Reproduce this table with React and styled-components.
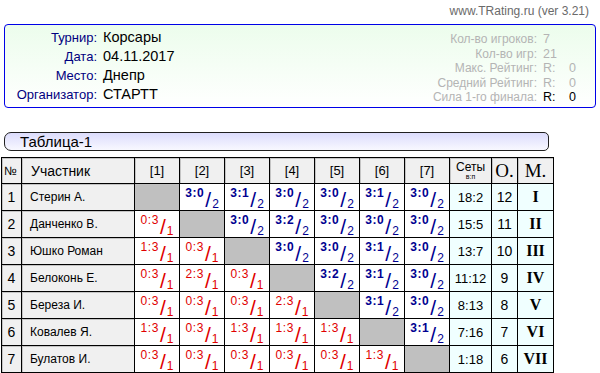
import styled, { createGlobalStyle } from "styled-components";

const GlobalStyle = createGlobalStyle`
  html, body {
    margin: 0;
    padding: 0;
    background: #fff;
  }
  body {
    font-family: "Liberation Sans", Arial, sans-serif;
    color: #000;
  }
`;

const Page = styled.div`
  width: 600px;
  height: 373px;
  overflow: hidden;
  display: flex;
  flex-direction: column;
`;

const SiteLine = styled.div`
  height: 24px;
  padding-right: 11px;
  font-size: 12px;
  line-height: 22px;
  color: #6a6a6a;
  text-align: right;
`;

const InfoBox = styled.div`
  margin: 0 4px;
  height: 82px;
  border: 1px solid #0000e8;
  border-radius: 4px;
  background: linear-gradient(to bottom, #ecfdec, #ffffff);
  display: flex;
  justify-content: space-between;
`;

const MainInfo = styled.div`
  display: grid;
  grid-template-columns: 92px auto;
  column-gap: 6px;
  padding-top: 3px;
  align-content: start;
`;

const InfoLabel = styled.div`
  font-size: 13px;
  line-height: 19px;
  color: #000080;
  text-align: right;
`;

const InfoValue = styled.div`
  font-size: 14.5px;
  line-height: 19px;
`;

const Stats = styled.div`
  display: grid;
  grid-template-columns: auto 34px;
  column-gap: 6px;
  padding: 7px 18px 0 0;
  align-content: start;
`;

const StatLabel = styled.div`
  font-size: 12px;
  line-height: 14.6px;
  color: #b4b4b4;
  text-align: right;
`;

const StatValue = styled.div`
  display: flex;
  font-size: 12.5px;
  line-height: 14.6px;
  color: ${(p) => (p.$dark ? "#000" : "#b4b4b4")};
`;

const RLabel = styled.span`
  width: 26px;
`;

const TitleBar = styled.div`
  margin: 24px 51px 0 4px;
  height: 17px;
  border: 1px solid #202020;
  border-radius: 7px 5px 5px 7px;
  background: linear-gradient(to bottom, #dcdcfc, #f8f8ff);
  padding-left: 15px;
  font-size: 15px;
  line-height: 17px;
`;

const Table = styled.table`
  margin: 6px 0 0 1px;
  border-collapse: collapse;
  table-layout: fixed;
  width: 553px;
  border: 1px solid #000;
`;

const Th = styled.th`
  height: 25px;
  padding: 0;
  border: 1px solid #000;
  background: #f0f0f0;
  box-shadow: inset 1px 1px 0 #c4c4c4;
  font-weight: normal;
  font-size: ${(p) => p.$size || 13}px;
  font-family: ${(p) =>
    p.$serif
      ? '"Liberation Serif", "Times New Roman", serif'
      : '"Liberation Sans", Arial, sans-serif'};
  text-align: ${(p) => p.$align || "center"};
  padding-left: ${(p) => p.$pad || 0}px;
  vertical-align: middle;
  line-height: 1;
`;

const SetsHead = styled.div`
  font-size: 12px;
  line-height: 12px;
  margin-top: 1px;
`;

const SmallSub = styled.div`
  font-size: 7px;
  line-height: 8px;
`;

const Td = styled.td`
  height: 26px;
  padding: 0;
  border: 1px solid #000;
  vertical-align: middle;
  text-align: center;
  line-height: 1;
`;

const NumCell = styled(Td)`
  background: #f0f0f0;
  box-shadow: inset 1px 1px 0 #c4c4c4;
  font-size: 14px;
`;

const NameCell = styled(Td)`
  background: #f0f0f0;
  box-shadow: inset 1px 1px 0 #c4c4c4;
  font-size: 12px;
  text-align: left;
  padding-left: 8px;
`;

const EmptyCell = styled(Td)`
  background: #c0c0c0;
`;

const ScoreCell = styled(Td)`
  background: #fff;
`;

const TotalCell = styled(Td)`
  background: #f0ffff;
  font-size: ${(p) => p.$size || 13}px;
  font-family: ${(p) =>
    p.$serif
      ? '"Liberation Serif", "Times New Roman", serif'
      : '"Liberation Sans", Arial, sans-serif'};
  font-weight: ${(p) => (p.$serif ? "bold" : "normal")};
`;

const ScoreBox = styled.div`
  display: flex;
  justify-content: center;
  height: 26px;
  color: ${(p) => (p.$win ? "#000090" : "#e00000")};
  font-weight: ${(p) => (p.$win ? "bold" : "normal")};
`;

const Sets = styled.span`
  font-size: 12px;
  line-height: 12px;
  margin-top: 3px;
  letter-spacing: 0.6px;
`;

const Slash = styled.span`
  font-size: 21px;
  line-height: 21px;
  margin: 5px 0 0 1px;
  font-weight: normal;
`;

const Points = styled.span`
  font-size: 12px;
  line-height: 12px;
  margin: 14px 0 0 1px;
  font-weight: normal;
`;

const players = [
  { name: "Стерин А.", games: ["x", "3:0", "3:1", "3:0", "3:0", "3:1", "3:0"], sets: "18:2", pts: 12, place: "I" },
  { name: "Данченко В.", games: ["0:3", "x", "3:0", "3:2", "3:0", "3:0", "3:0"], sets: "15:5", pts: 11, place: "II" },
  { name: "Юшко Роман", games: ["1:3", "0:3", "x", "3:0", "3:0", "3:1", "3:0"], sets: "13:7", pts: 10, place: "III" },
  { name: "Белоконь Е.", games: ["0:3", "2:3", "0:3", "x", "3:2", "3:1", "3:0"], sets: "11:12", pts: 9, place: "IV" },
  { name: "Береза И.", games: ["0:3", "0:3", "0:3", "2:3", "x", "3:1", "3:0"], sets: "8:13", pts: 8, place: "V" },
  { name: "Ковалев Я.", games: ["1:3", "0:3", "1:3", "1:3", "1:3", "x", "3:1"], sets: "7:16", pts: 7, place: "VI" },
  { name: "Булатов И.", games: ["0:3", "0:3", "0:3", "0:3", "0:3", "1:3", "x"], sets: "1:18", pts: 6, place: "VII" },
];

const Game = ({ score }) => {
  const win = score.startsWith("3");
  return (
    <ScoreBox $win={win}>
      <Sets>{score}</Sets>
      <Slash>/</Slash>
      <Points>{win ? 2 : 1}</Points>
    </ScoreBox>
  );
};

const App = () => {
  return (
    <Page>
      <GlobalStyle />
      <SiteLine>www.TRating.ru (ver 3.21)</SiteLine>
      <InfoBox>
        <MainInfo>
          <InfoLabel>Турнир:</InfoLabel>
          <InfoValue>Корсары</InfoValue>
          <InfoLabel>Дата:</InfoLabel>
          <InfoValue>04.11.2017</InfoValue>
          <InfoLabel>Место:</InfoLabel>
          <InfoValue>Днепр</InfoValue>
          <InfoLabel>Организатор:</InfoLabel>
          <InfoValue>СТАРТТ</InfoValue>
        </MainInfo>
        <Stats>
          <StatLabel>Кол-во игроков:</StatLabel>
          <StatValue>7</StatValue>
          <StatLabel>Кол-во игр:</StatLabel>
          <StatValue>21</StatValue>
          <StatLabel>Макс. Рейтинг:</StatLabel>
          <StatValue>
            <RLabel>R:</RLabel>0
          </StatValue>
          <StatLabel>Средний Рейтинг:</StatLabel>
          <StatValue>
            <RLabel>R:</RLabel>0
          </StatValue>
          <StatLabel>Сила 1-го финала:</StatLabel>
          <StatValue $dark>
            <RLabel>R:</RLabel>0
          </StatValue>
        </Stats>
      </InfoBox>
      <TitleBar>Таблица-1</TitleBar>
      <Table>
        <colgroup>
          <col style={{ width: 20 }} />
          <col style={{ width: 113 }} />
          {[1, 2, 3, 4, 5, 6, 7].map((n) => (
            <col key={n} style={{ width: 45 }} />
          ))}
          <col style={{ width: 42 }} />
          <col style={{ width: 26 }} />
          <col style={{ width: 36 }} />
        </colgroup>
        <thead>
          <tr>
            <Th $size={12} $align="left" $pad={2}>№</Th>
            <Th $size={14} $align="left" $pad={9}>Участник</Th>
            {[1, 2, 3, 4, 5, 6, 7].map((n) => (
              <Th key={n}>[{n}]</Th>
            ))}
            <Th>
              <SetsHead>Сеты</SetsHead>
              <SmallSub>в:п</SmallSub>
            </Th>
            <Th $size={19} $serif>О.</Th>
            <Th $size={19} $serif>М.</Th>
          </tr>
        </thead>
        <tbody>
          {players.map((p, i) => (
            <tr key={p.name}>
              <NumCell>{i + 1}</NumCell>
              <NameCell>{p.name}</NameCell>
              {p.games.map((g, j) =>
                g === "x" ? (
                  <EmptyCell key={j} />
                ) : (
                  <ScoreCell key={j}>
                    <Game score={g} />
                  </ScoreCell>
                )
              )}
              <TotalCell>{p.sets}</TotalCell>
              <TotalCell $size={14}>{p.pts}</TotalCell>
              <TotalCell $size={16} $serif>{p.place}</TotalCell>
            </tr>
          ))}
        </tbody>
      </Table>
    </Page>
  );
};

export default App;
